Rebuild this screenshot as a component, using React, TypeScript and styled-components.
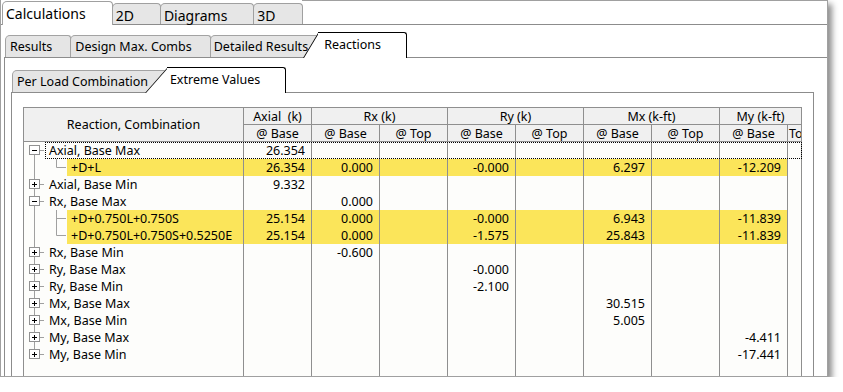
import React from 'react';
import styled, { createGlobalStyle } from 'styled-components';

const GlobalStyle = createGlobalStyle`
  html, body {
    margin: 0;
    padding: 0;
    background: #ffffff;
  }
  body {
    font-family: "Noto Sans", "Open Sans", sans-serif;
    color: #000;
  }
`;

const Window = styled.div`
  width: 828px;
  height: 377px;
  box-sizing: border-box;
  border: 1px solid #a0a0a0;
  border-top: none;
  background: #fff;
  box-shadow: 4px 4px 6px rgba(0, 0, 0, 0.45);
  overflow: hidden;
  display: flex;
  flex-direction: column;
`;

const TabStrip = styled.div<{ $pad: number; $height: number }>`
  display: flex;
  align-items: flex-end;
  height: ${p => p.$height}px;
  box-sizing: border-box;
  padding-left: ${p => p.$pad}px;
  border-bottom: 1px solid #8c8c8c;
  flex-shrink: 0;
`;

const StripFill = styled.div`
  flex: 1;
  align-self: stretch;
  border-top: 1px solid #a0a0a0;
`;

const TopTab = styled.div<{ $active?: boolean }>`
  height: ${p => (p.$active ? 24 : 21)}px;
  margin-bottom: ${p => (p.$active ? -1 : 0)}px;
  box-sizing: border-box;
  padding: 3px 26px 0 3px;
  background: ${p => (p.$active ? '#ffffff' : '#e6e6e6')};
  border: 1px solid #a0a0a0;
  border-bottom: none;
  border-radius: 5px 4px 0 0;
  margin-right: -1px;
  position: relative;
  z-index: ${p => (p.$active ? 1 : 0)};
  font-size: 14px;
  line-height: 17px;
  white-space: nowrap;
`;

const SubTab = styled.div<{ $tight?: boolean }>`
  height: 22px;
  box-sizing: border-box;
  padding: 0 18px 0 ${p => (p.$tight ? 3 : 4)}px;
  display: flex;
  align-items: center;
  background: #e5e5e5;
  border: 1px solid #a3a3a3;
  border-bottom: none;
  border-radius: 5px 3px 0 0;
  margin-right: -1px;
  font-size: 12.5px;
  white-space: nowrap;
`;

const SlantTab = styled.div<{ $slant: number; $overlap: number; $left: number; $right: number }>`
  position: relative;
  z-index: 1;
  height: 26px;
  margin-bottom: -1px;
  margin-left: -${p => p.$overlap}px;
  box-sizing: border-box;
  padding: 0 ${p => p.$right}px 1px ${p => p.$left}px;
  display: flex;
  align-items: center;
  font-size: 12.5px;
  white-space: nowrap;

  &::before {
    content: '';
    position: absolute;
    left: 0;
    top: 0;
    bottom: 0;
    width: ${p => p.$slant + 6}px;
    background: #fff;
    border-left: 1px solid #000;
    border-top: 1px solid #000;
    transform-origin: bottom left;
    transform: skewX(-${p => (Math.atan(p.$slant / 25) * 180) / Math.PI}deg);
    z-index: -1;
  }

  &::after {
    content: '';
    position: absolute;
    left: ${p => p.$slant}px;
    right: 0;
    top: 0;
    bottom: 0;
    background: #fff;
    border-top: 1px solid #000;
    border-right: 1px solid #000;
    border-top-right-radius: 3px;
    z-index: -1;
  }
`;

const LevelOne = styled.div`
  flex: 1;
  display: flex;
  flex-direction: column;
  padding: 7px 0 0 3px;
  min-height: 0;
`;

const LevelTwo = styled.div`
  flex: 1;
  display: flex;
  flex-direction: column;
  border-left: 1px solid #8c8c8c;
  padding: 9px 13px 0 6px;
  min-height: 0;
`;

const LevelThree = styled.div`
  flex: 1;
  border-left: 1px solid #8c8c8c;
  border-right: 1px solid #8c8c8c;
  padding: 14px 11px 0 11px;
  min-height: 0;
`;

const COLS = '220px repeat(8, 68px) 14px';
const LINE = '#8f8f8f';

const Table = styled.div`
  width: 779px;
  font-size: 12.5px;
`;

const HeadGrid = styled.div`
  display: grid;
  grid-template-columns: ${COLS};
  grid-template-rows: 17px 17px;
  background: #f0f0f0;
  border-top: 1px solid ${LINE};
  border-left: 1px solid ${LINE};
`;

const HeadCell = styled.div<{ $span?: number; $rows?: number; $clip?: boolean }>`
  grid-column: span ${p => p.$span || 1};
  grid-row: span ${p => p.$rows || 1};
  box-sizing: border-box;
  border-right: 1px solid ${LINE};
  border-bottom: 1px solid ${LINE};
  display: flex;
  align-items: center;
  justify-content: ${p => (p.$clip ? 'flex-start' : 'center')};
  padding-left: ${p => (p.$clip ? 1 : 0)}px;
  white-space: pre;
  overflow: hidden;
`;

const Body = styled.div`
  background: #fdfdfb;
  border-left: 1px solid ${LINE};
`;

const Row = styled.div<{ $focus?: boolean }>`
  display: grid;
  grid-template-columns: ${COLS};
  height: 17px;
  position: relative;

  ${p =>
    p.$focus &&
    `
    &::after {
      content: '';
      position: absolute;
      left: 21px;
      right: 0;
      top: 0;
      bottom: 0;
      border: 1px dotted #000;
      pointer-events: none;
    }
  `}
`;

const Filler = styled(Row)`
  height: 40px;
`;

const Cell = styled.div<{ $hl?: boolean }>`
  box-sizing: border-box;
  border-right: 1px solid ${LINE};
  background: ${p => (p.$hl ? '#fbe55a' : 'transparent')};
  text-align: right;
  padding-right: 6px;
  line-height: 17px;
  white-space: nowrap;
  overflow: hidden;
`;

const NameCell = styled.div`
  box-sizing: border-box;
  border-right: 1px solid ${LINE};
  display: flex;
  align-items: stretch;
  white-space: nowrap;
`;

const Label = styled.span<{ $hl?: boolean }>`
  flex: ${p => (p.$hl ? 1 : 'none')};
  background: ${p => (p.$hl ? '#fbe55a' : 'transparent')};
  padding-left: ${p => (p.$hl ? 4 : 5)}px;
  line-height: 17px;
`;

type Item = {
  label: string;
  kind: 'parent' | 'child';
  open?: boolean;
  first?: boolean;
  last?: boolean;
  hl?: boolean;
  focus?: boolean;
  vals: string[];
};

const rows: Item[] = [
  { label: 'Axial, Base Max', kind: 'parent', open: true, first: true, focus: true, vals: ['26.354'] },
  { label: '+D+L', kind: 'child', last: true, hl: true, vals: ['26.354', '0.000', '', '-0.000', '', '6.297', '', '-12.209'] },
  { label: 'Axial, Base Min', kind: 'parent', vals: ['9.332'] },
  { label: 'Rx, Base Max', kind: 'parent', open: true, vals: ['', '0.000'] },
  { label: '+D+0.750L+0.750S', kind: 'child', hl: true, vals: ['25.154', '0.000', '', '-0.000', '', '6.943', '', '-11.839'] },
  { label: '+D+0.750L+0.750S+0.5250E', kind: 'child', last: true, hl: true, vals: ['25.154', '0.000', '', '-1.575', '', '25.843', '', '-11.839'] },
  { label: 'Rx, Base Min', kind: 'parent', vals: ['', '-0.600'] },
  { label: 'Ry, Base Max', kind: 'parent', vals: ['', '', '', '-0.000'] },
  { label: 'Ry, Base Min', kind: 'parent', vals: ['', '', '', '-2.100'] },
  { label: 'Mx, Base Max', kind: 'parent', vals: ['', '', '', '', '', '30.515'] },
  { label: 'Mx, Base Min', kind: 'parent', vals: ['', '', '', '', '', '5.005'] },
  { label: 'My, Base Max', kind: 'parent', vals: ['', '', '', '', '', '', '', '-4.411'] },
  { label: 'My, Base Min', kind: 'parent', last: true, vals: ['', '', '', '', '', '', '', '-17.441'] },
];

const TREE = '#a0a0a0';

const TreeGlyph = ({ item }: { item: Item }) => {
  if (item.kind === 'child') {
    return (
      <svg width="43" height="17" style={{ flex: 'none' }}>
        <line x1="10.5" y1="0" x2="10.5" y2="17" stroke={TREE} />
        <line x1="32.5" y1="0" x2="32.5" y2={item.last ? 8.5 : 17} stroke={TREE} />
        <line x1="32.5" y1="8.5" x2="42" y2="8.5" stroke={TREE} />
      </svg>
    );
  }
  return (
    <svg width="20" height="17" style={{ flex: 'none' }}>
      {!item.first && <line x1="10.5" y1="0" x2="10.5" y2="3.5" stroke={TREE} />}
      {(!item.last || item.open) && <line x1="10.5" y1="12.5" x2="10.5" y2="17" stroke={TREE} />}
      <line x1="14.5" y1="8.5" x2="20" y2="8.5" stroke={TREE} />
      <rect x="5.5" y="3.5" width="10" height="9" fill="#fff" stroke="#919191" />
      <line x1="8" y1="8.5" x2="13" y2="8.5" stroke="#000" />
      {!item.open && <line x1="10.5" y1="6" x2="10.5" y2="11" stroke="#000" />}
    </svg>
  );
};

const App = () => {
  return (
    <>
      <GlobalStyle />
      <Window>
        <TabStrip $pad={1} $height={25}>
          <TopTab $active>Calculations</TopTab>
          <TopTab>2D</TopTab>
          <TopTab>Diagrams</TopTab>
          <TopTab>3D</TopTab>
          <StripFill />
        </TabStrip>
        <LevelOne>
          <TabStrip $pad={1} $height={26}>
            <SubTab>Results</SubTab>
            <SubTab>Design Max. Combs</SubTab>
            <SubTab $tight>Detailed Results</SubTab>
            <SlantTab $slant={15} $overlap={23} $left={21} $right={26}>Reactions</SlantTab>
          </TabStrip>
          <LevelTwo>
            <TabStrip $pad={1} $height={26}>
              <SubTab>Per Load Combination</SubTab>
              <SlantTab $slant={22} $overlap={21} $left={25} $right={26}>Extreme Values</SlantTab>
            </TabStrip>
            <LevelThree>
              <Table>
                <HeadGrid>
                  <HeadCell $rows={2}>Reaction, Combination</HeadCell>
                  <HeadCell>Axial  (k)</HeadCell>
                  <HeadCell $span={2}>Rx (k)</HeadCell>
                  <HeadCell $span={2}>Ry (k)</HeadCell>
                  <HeadCell $span={2}>Mx (k-ft)</HeadCell>
                  <HeadCell $span={2}>My (k-ft)</HeadCell>
                  <HeadCell>@ Base</HeadCell>
                  <HeadCell>@ Base</HeadCell>
                  <HeadCell>@ Top</HeadCell>
                  <HeadCell>@ Base</HeadCell>
                  <HeadCell>@ Top</HeadCell>
                  <HeadCell>@ Base</HeadCell>
                  <HeadCell>@ Top</HeadCell>
                  <HeadCell>@ Base</HeadCell>
                  <HeadCell $clip>Top</HeadCell>
                </HeadGrid>
                <Body>
                  {rows.map((r, i) => (
                    <Row key={i} $focus={r.focus}>
                      <NameCell>
                        <TreeGlyph item={r} />
                        <Label $hl={r.hl}>{r.label}</Label>
                      </NameCell>
                      {Array.from({ length: 9 }).map((_, c) => (
                        <Cell key={c} $hl={r.hl && c < 8}>
                          {r.vals[c] || ''}
                        </Cell>
                      ))}
                    </Row>
                  ))}
                  <Filler>
                    {Array.from({ length: 10 }).map((_, c) => (
                      <Cell key={c} />
                    ))}
                  </Filler>
                </Body>
              </Table>
            </LevelThree>
          </LevelTwo>
        </LevelOne>
      </Window>
    </>
  );
};

export default App;
